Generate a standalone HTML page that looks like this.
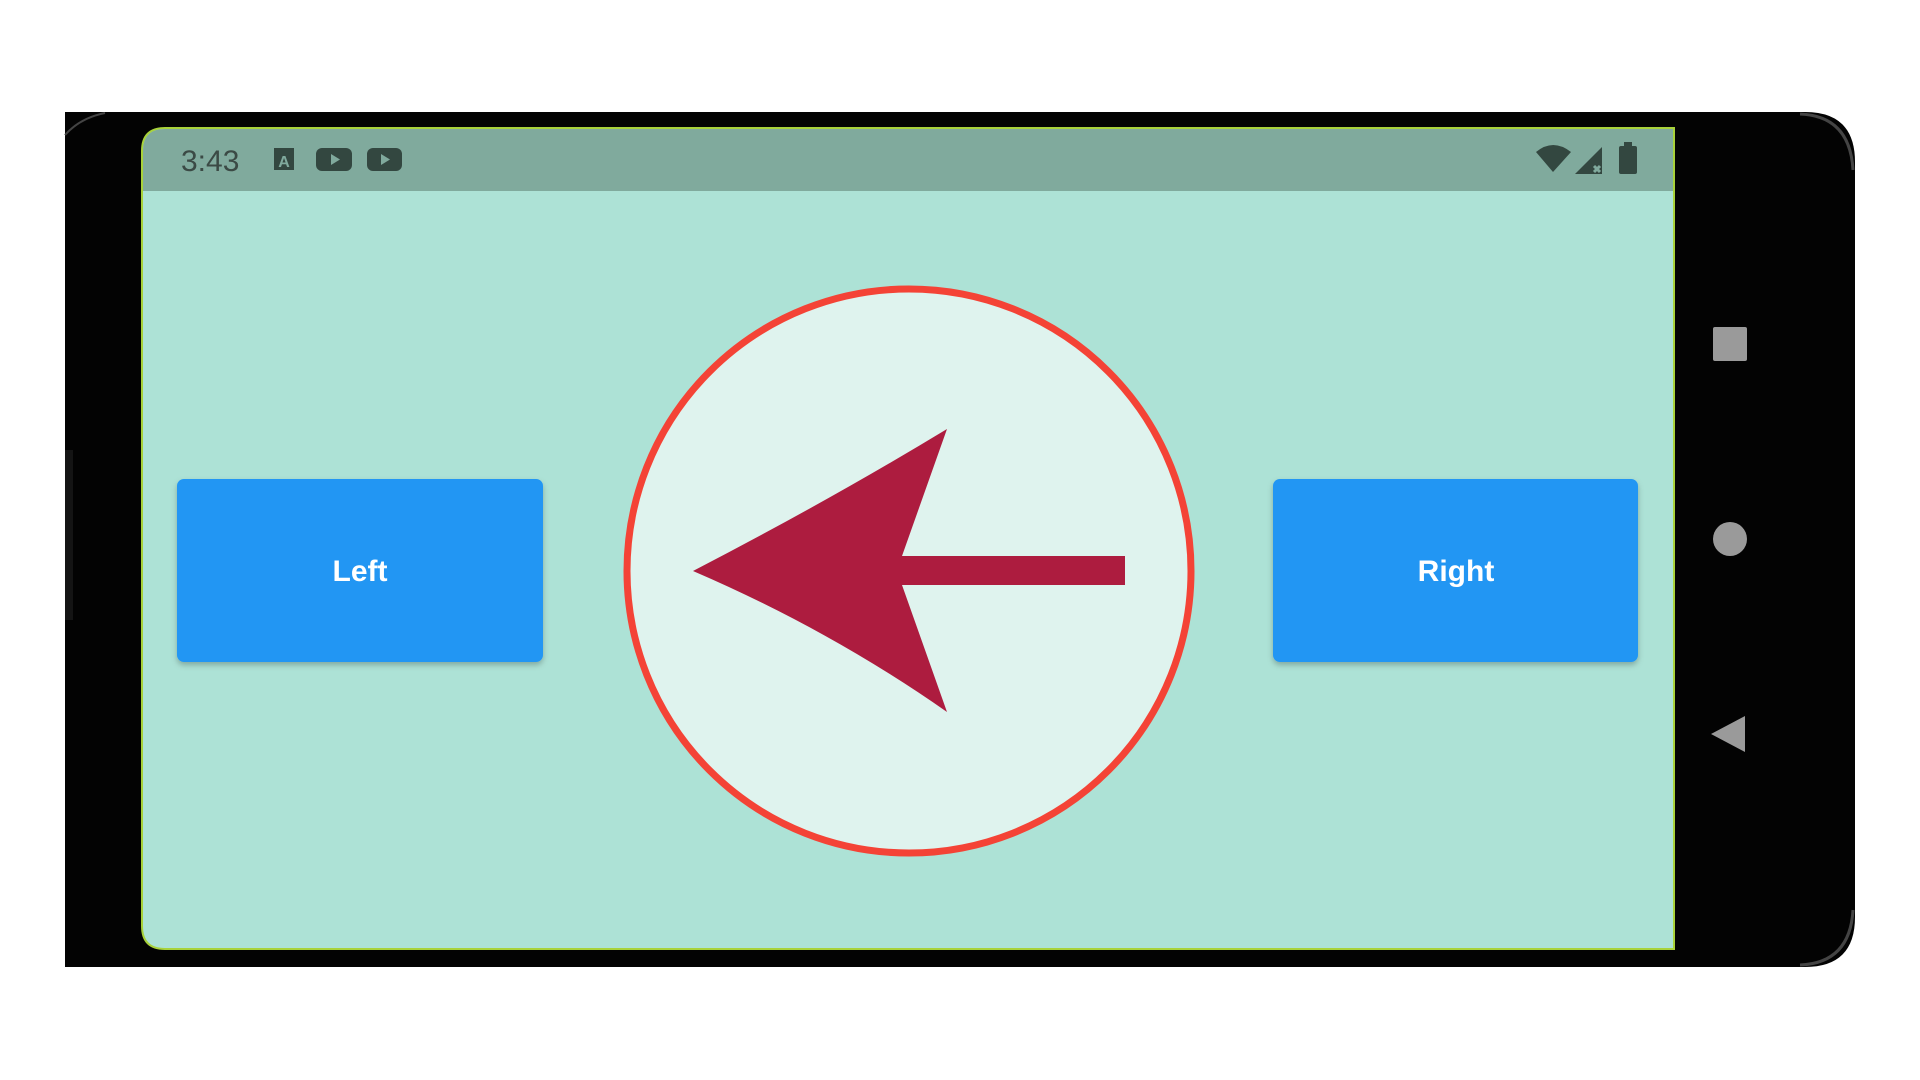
<!DOCTYPE html>
<html><head><meta charset="utf-8"><style>
html,body{margin:0;padding:0;background:#fff;width:1920px;height:1080px;overflow:hidden}
svg{display:block}
</style></head><body>
<svg width="1920" height="1080" viewBox="0 0 1920 1080" xmlns="http://www.w3.org/2000/svg">
<defs>
<filter id="sh" x="-10%" y="-10%" width="120%" height="130%"><feDropShadow dx="0" dy="3" stdDeviation="3" flood-color="#000" flood-opacity="0.25"/></filter>
</defs>
<path d="M65 112 H1805 Q1855 112 1855 162 V917 Q1855 967 1805 967 H65 Z" fill="#030303"/>
<path d="M1800 114 Q1850 116 1853 170" stroke="#444" stroke-width="3" fill="none"/>
<path d="M1800 965 Q1850 963 1853 910" stroke="#444" stroke-width="3" fill="none"/>
<path d="M65 135 Q80 118 105 113" stroke="#444" stroke-width="2" fill="none"/>
<rect x="65" y="450" width="8" height="170" fill="#141414"/>
<path d="M165 128 H1674 V949 H165 Q142 949 142 926 V151 Q142 128 165 128 Z" fill="#ade2d6" stroke="#a8d23a" stroke-width="2"/>
<path d="M165 129 H1673 V191 H143 V151 Q143 129 165 129 Z" fill="#80aa9d"/>
<text x="181" y="171" font-family="Liberation Sans, sans-serif" font-size="30" fill="#3b4a45">3:43</text>
<rect x="274" y="148" width="20" height="22" fill="#334740"/>
<text x="284" y="167" text-anchor="middle" font-family="Liberation Sans, sans-serif" font-size="16" font-weight="bold" fill="#80aa9d">A</text>
<rect x="316" y="148" width="36" height="23" rx="6" fill="#334740"/>
<path d="M331 154 L340 159.5 L331 165 Z" fill="#80aa9d"/>
<rect x="367" y="148" width="35" height="23" rx="6" fill="#334740"/>
<path d="M381 154 L390 159.5 L381 165 Z" fill="#80aa9d"/>
<path d="M1536 152 Q1553 138 1571 152 L1553 172 Z" fill="#334740"/>
<path d="M1575 174 L1602 147 V174 Z" fill="#334740"/>
<path d="M1594 166 l6 6 m0 -6 l-6 6" stroke="#80aa9d" stroke-width="3"/>
<rect x="1619" y="146" width="18" height="28" rx="2" fill="#334740"/>
<rect x="1624" y="142" width="8" height="5" fill="#334740"/>
<rect x="177" y="479" width="366" height="183" rx="7" fill="#2196f3" filter="url(#sh)"/>
<text x="360" y="581" text-anchor="middle" font-family="Liberation Sans, sans-serif" font-size="30" font-weight="bold" fill="#fff">Left</text>
<rect x="1273" y="479" width="365" height="183" rx="7" fill="#2196f3" filter="url(#sh)"/>
<text x="1456" y="581" text-anchor="middle" font-family="Liberation Sans, sans-serif" font-size="30" font-weight="bold" fill="#fff">Right</text>
<circle cx="909" cy="571" r="282" fill="#dff3ee" stroke="#f44336" stroke-width="7"/>
<path d="M693 571 Q830 500 947 429 L902 556 H1125 V585 H902 L947 712 Q830 630 693 571 Z" fill="#ad1c3f"/>
<rect x="1713" y="327" width="34" height="34" rx="2" fill="#9a9a9a"/>
<circle cx="1730" cy="539" r="17" fill="#9a9a9a"/>
<path d="M1711 734 L1745 716 V752 Z" fill="#9a9a9a"/>
</svg>
</body></html>
